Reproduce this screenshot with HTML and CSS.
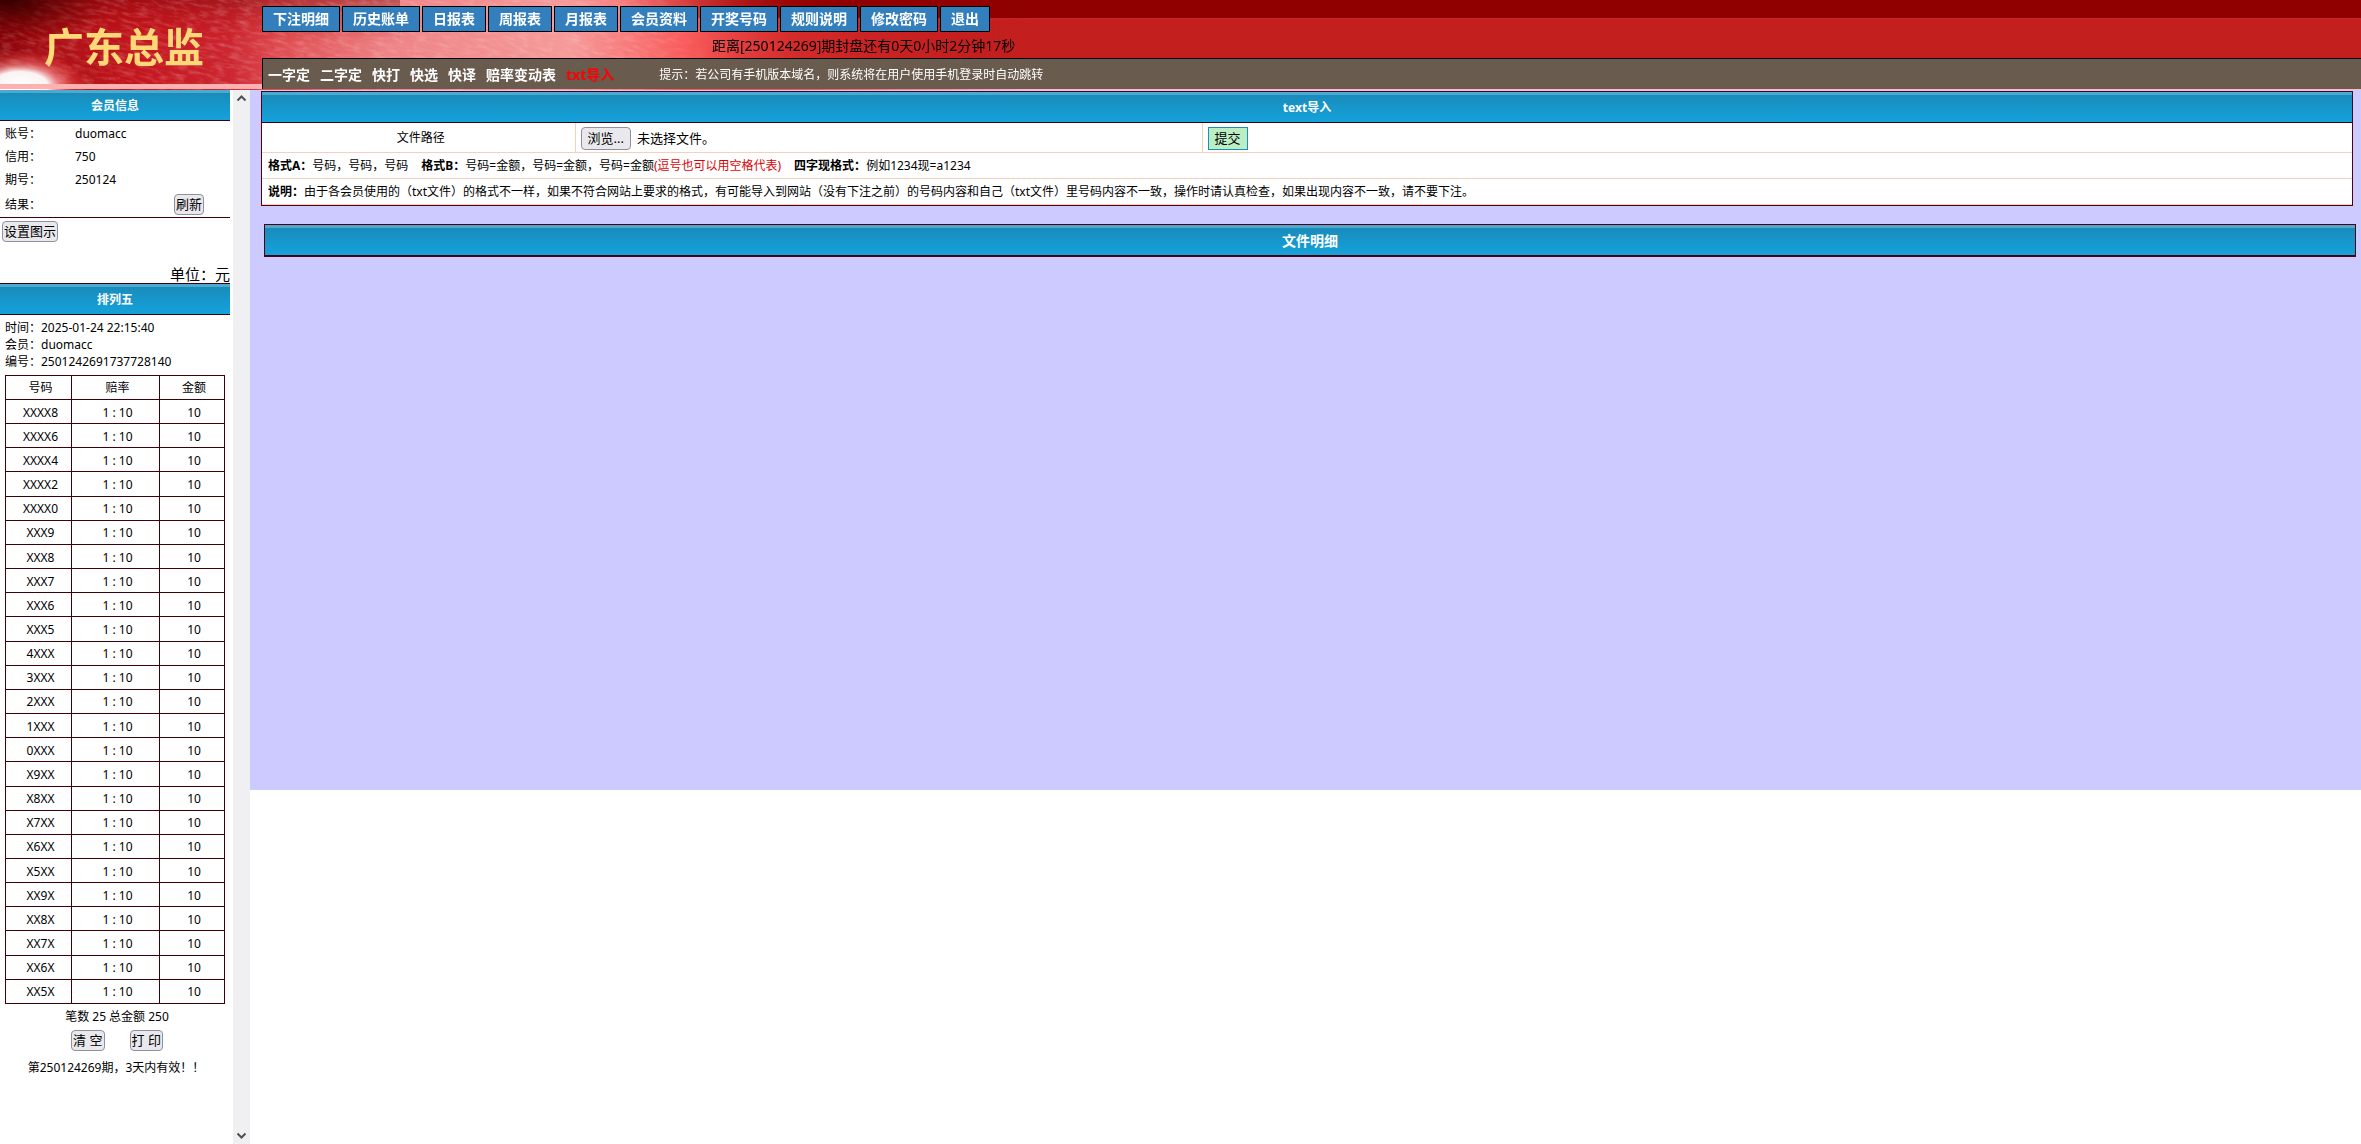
FILE: index.html
```html
<!DOCTYPE html>
<html lang="zh-CN">
<head>
<meta charset="utf-8">
<title>广东总监</title>
<link rel="stylesheet" href="styles.css">
</head>
<body>
<header class="top">
  <svg class="top-art" width="1140" height="90" aria-hidden="true">
    <defs>
      <linearGradient id="base" x1="0" x2="1" y1="0" y2="0">
        <stop offset="0" stop-color="#8a0308"/><stop offset=".04" stop-color="#a80f14"/><stop offset=".12" stop-color="#c4161e"/>
        <stop offset=".2" stop-color="#cc2630"/><stop offset=".25" stop-color="#e05054"/><stop offset=".34" stop-color="#ee8486"/>
        <stop offset=".5" stop-color="#f69a9a"/><stop offset=".6" stop-color="#fa5c5c"/><stop offset=".7" stop-color="#dc3030"/><stop offset=".88" stop-color="#c41e1e"/>
      </linearGradient>
      <linearGradient id="shade" x1="0" x2="0" y1="0" y2="1">
        <stop offset="0" stop-color="#700000" stop-opacity=".4"/><stop offset=".5" stop-color="#c00" stop-opacity="0"/>
      </linearGradient>
      <radialGradient id="glow"><stop offset="0" stop-color="#fff"/><stop offset=".4" stop-color="#fff" stop-opacity=".95"/><stop offset=".6" stop-color="#ff9090" stop-opacity=".6"/><stop offset="1" stop-color="#f33" stop-opacity="0"/></radialGradient>
      <radialGradient id="dark"><stop offset="0" stop-color="#300"/><stop offset="1" stop-color="#600" stop-opacity="0"/></radialGradient>
      <linearGradient id="corner" x1="0" x2="1" y1="0" y2="0"><stop offset="0" stop-color="#900000" stop-opacity="0"/><stop offset=".4" stop-color="#900000"/></linearGradient>
      <linearGradient id="fade" x1="0" x2="1" y1="0" y2="0"><stop offset="0" stop-color="#fff"/><stop offset=".6" stop-color="#fff"/><stop offset=".9" stop-color="#000"/></linearGradient>
      <linearGradient id="grain-fade" x1="0" x2="1" y1="0" y2="0"><stop offset="0" stop-color="#fff"/><stop offset=".55" stop-color="#fff"/><stop offset=".64" stop-color="#000"/></linearGradient>
      <mask id="m"><rect width="1140" height="90" fill="url(#fade)"/></mask>
      <mask id="gm"><rect width="1140" height="90" fill="url(#grain-fade)"/></mask>
      <filter id="grain" x="0" y="0" width="100%" height="100%"><feTurbulence type="fractalNoise" baseFrequency=".08 .3" numOctaves="4" seed="4"/><feColorMatrix values="0 0 0 0 1  0 0 0 0 .75  0 0 0 0 .75  2 0 0 0 -.85"/></filter>
    </defs>
    <g mask="url(#m)">
      <rect width="1140" height="90" fill="url(#base)"/>
      <rect width="400" height="90" fill="url(#shade)"/>
      <g mask="url(#gm)"><g transform="rotate(14 400 45)"><rect x="-100" y="-200" width="900" height="500" filter="url(#grain)" opacity=".28"/></g></g>
      <ellipse cx="10" cy="0" rx="100" ry="45" fill="url(#dark)"/>
      <ellipse cx="20" cy="86" rx="70" ry="36" fill="url(#glow)"/>
      <rect x="620" width="520" height="18" fill="url(#corner)"/>
    </g>
  </svg>
  <h1 class="logo">广东总监</h1>
  <div class="top-main">
    <nav class="nav">
      <button>下注明细</button><button>历史账单</button><button>日报表</button><button>周报表</button><button>月报表</button><button>会员资料</button><button>开奖号码</button><button>规则说明</button><button>修改密码</button><button>退出</button>
    </nav>
    <p class="countdown">距离[250124269]期封盘还有0天0小时2分钟17秒</p>
    <div class="menu">
      <a href="#">一字定</a><a href="#">二字定</a><a href="#">快打</a><a href="#">快选</a><a href="#">快译</a><a href="#">赔率变动表</a><a href="#" class="current">txt导入</a>
      <span class="tip">提示：若公司有手机版本域名，则系统将在用户使用手机登录时自动跳转</span>
    </div>
  </div>
</header>
<div class="body">
  <aside class="side">
    <div class="side-content">
      <h2 class="bar">会员信息</h2>
      <dl class="info">
        <div><dt>账号：</dt><dd>duomacc</dd></div>
        <div><dt>信用：</dt><dd>750</dd></div>
        <div><dt>期号：</dt><dd>250124</dd></div>
        <div class="result"><dt>结果：</dt><dd><button class="btn">刷新</button></dd></div>
      </dl>
      <div class="legend"><button class="btn">设置图示</button></div>
      <p class="unit">单位：元</p>
      <h2 class="bar ruled">排列五</h2>
      <div class="receipt">
        <p>时间：2025-01-24 22:15:40</p>
        <p>会员：duomacc</p>
        <p>编号：2501242691737728140</p>
      </div>
      <table class="bets">
        <thead><tr><th class="c1">号码</th><th class="c2">赔率</th><th>金额</th></tr></thead>
        <tbody>
          <tr><td>XXXX8</td><td>1 : 10</td><td>10</td></tr>
          <tr><td>XXXX6</td><td>1 : 10</td><td>10</td></tr>
          <tr><td>XXXX4</td><td>1 : 10</td><td>10</td></tr>
          <tr><td>XXXX2</td><td>1 : 10</td><td>10</td></tr>
          <tr><td>XXXX0</td><td>1 : 10</td><td>10</td></tr>
          <tr><td>XXX9</td><td>1 : 10</td><td>10</td></tr>
          <tr><td>XXX8</td><td>1 : 10</td><td>10</td></tr>
          <tr><td>XXX7</td><td>1 : 10</td><td>10</td></tr>
          <tr><td>XXX6</td><td>1 : 10</td><td>10</td></tr>
          <tr><td>XXX5</td><td>1 : 10</td><td>10</td></tr>
          <tr><td>4XXX</td><td>1 : 10</td><td>10</td></tr>
          <tr><td>3XXX</td><td>1 : 10</td><td>10</td></tr>
          <tr><td>2XXX</td><td>1 : 10</td><td>10</td></tr>
          <tr><td>1XXX</td><td>1 : 10</td><td>10</td></tr>
          <tr><td>0XXX</td><td>1 : 10</td><td>10</td></tr>
          <tr><td>X9XX</td><td>1 : 10</td><td>10</td></tr>
          <tr><td>X8XX</td><td>1 : 10</td><td>10</td></tr>
          <tr><td>X7XX</td><td>1 : 10</td><td>10</td></tr>
          <tr><td>X6XX</td><td>1 : 10</td><td>10</td></tr>
          <tr><td>X5XX</td><td>1 : 10</td><td>10</td></tr>
          <tr><td>XX9X</td><td>1 : 10</td><td>10</td></tr>
          <tr><td>XX8X</td><td>1 : 10</td><td>10</td></tr>
          <tr><td>XX7X</td><td>1 : 10</td><td>10</td></tr>
          <tr><td>XX6X</td><td>1 : 10</td><td>10</td></tr>
          <tr><td>XX5X</td><td>1 : 10</td><td>10</td></tr>
        </tbody>
      </table>
      <p class="sum">笔数 25 总金额 250</p>
      <div class="actions"><button class="btn">清 空</button><button class="btn">打 印</button></div>
      <p class="valid">第250124269期，3天内有效！！</p>
    </div>
    <div class="scroll" aria-hidden="true">
      <svg width="17" height="17" viewBox="0 0 17 17"><path d="M4.500 10.500l4-4 4 4" fill="none" stroke="#505050" stroke-width="2"/></svg>
      <svg width="17" height="17" viewBox="0 0 17 17"><path d="M4.500 6.500l4 4 4-4" fill="none" stroke="#505050" stroke-width="2"/></svg>
    </div>
  </aside>
  <main class="main">
    <form class="import">
      <h2 class="bar">text导入</h2>
      <div class="row file-row">
        <label class="path" for="file">文件路径</label>
        <div class="picker"><button type="button" class="btn browse" id="file">浏览...</button><span>未选择文件。</span></div>
        <div class="send"><button type="button" class="submit">提交</button></div>
      </div>
      <p class="row"><b>格式A：</b>号码，号码，号码<b class="next">格式B：</b>号码=金额，号码=金额，号码=金额<span class="note">(逗号也可以用空格代表)</span><b class="next">四字现格式：</b>例如1234现=a1234</p>
      <p class="row"><b>说明：</b>由于各会员使用的（txt文件）的格式不一样，如果不符合网站上要求的格式，有可能导入到网站（没有下注之前）的号码内容和自己（txt文件）里号码内容不一致，操作时请认真检查，如果出现内容不一致，请不要下注。</p>
    </form>
    <section class="details"><h2 class="bar detail-bar">文件明细</h2></section>
  </main>
</div>
</body>
</html>
```
FILE: styles.css
```css
* { box-sizing: border-box; }
body, h1, h2, p, dl, dd { margin: 0; }
body {
  display: flex;
  flex-direction: column;
  min-height: 100vh;
  background: #fff;
  color: #000;
  font: 12px/17px "Noto Sans", "Noto Sans CJK SC", sans-serif;
}
button, input { font-family: inherit; }

.top {
  position: relative;
  display: flex;
  height: 90px;
  background: linear-gradient(#900000 18px, #c82828 18px, #c41f1f 20px);
  border-bottom: 1px solid #ffb8c0;
}
.top-art { position: absolute; left: 0; top: 0; }
.logo {
  position: relative;
  width: 262px;
  padding: 18px 0 0 44px;
  color: #ffd878;
  font-size: 40px;
  line-height: 58px;
  border-bottom: 5px solid #ffb0b0;
}
.top-main { position: relative; flex: 1; display: flex; flex-direction: column; }
.nav { display: flex; gap: 2px; padding-top: 6px; }
.nav button {
  height: 26px;
  padding: 0 10px;
  border: 1px solid #000;
  background: #337fbe;
  color: #fff;
  font-size: 14px;
  font-weight: bold;
  line-height: 20px;
}
.countdown { padding: 2px 0 0 450px; font-size: 14px; line-height: 24px; }
.menu {
  display: flex;
  align-items: center;
  gap: 10px;
  height: 31px;
  padding-left: 5px;
  border-top: 1px solid #000;
  border-left: 1px solid #000;
  background: #695b4d;
  color: #fff;
}
.menu a { color: #fff; font-size: 14px; font-weight: bold; text-decoration: none; }
.menu .current { color: #f00; }
.tip { padding-left: 35px; }

.body { display: flex; flex: 1; align-items: flex-start; }
.side { display: flex; width: 250px; align-self: stretch; }
.side-content { flex: 1; margin-right: 3px; }
.scroll {
  display: flex;
  flex-direction: column;
  justify-content: space-between;
  width: 17px;
  background: #f0f0f2;
}
.bar {
  height: 31px;
  border-top: 3px solid #4fa9cf;
  border-bottom: 1px solid #400010;
  background: linear-gradient(#198cbb, #14a2db);
  color: #fff;
  font-size: 12px;
  line-height: 26px;
  text-align: center;
}
.info { padding-top: 1px; border-bottom: 1px solid #400008; }
.info div { display: flex; align-items: center; height: 23px; padding-left: 5px; }
.info dt { width: 70px; }
.info .result { height: 26px; }
.result dd { flex: 1; padding-left: 99px; }
.btn {
  height: 21px;
  padding: 0 1px;
  border: 1px solid #8f8f9d;
  border-radius: 4px;
  background: #e9e9ed;
  font-size: 13px;
  line-height: 17px;
}
.legend { display: flex; padding: 3px 1px 24px 2px; }
.unit { font-size: 15px; line-height: 17px; text-align: right; }
.ruled { box-shadow: 0 -1px #400008; margin-top: 1px; }
.receipt { padding: 4px 5px 5px; }
.bets { width: 220px; height: 629px; margin-left: 5px; border-collapse: collapse; table-layout: fixed; }
.bets th, .bets td { height: 24px; padding: 0 0 0 4px; border: 1px solid #400008; text-align: center; font-weight: normal; }
.bets td { padding-top: 1px; }
.c1 { width: 66px; }
.c2 { width: 88px; }
.sum { padding: 4px 0 5px 4px; text-align: center; }
.actions { display: flex; justify-content: center; gap: 25px; padding-left: 4px; }
.valid { padding: 8px 0 0 2px; text-align: center; }

.main {
  flex: 1;
  min-width: 0;
  min-height: 700px;
  padding: 1px 5px 0 11px;
  background: #cccaff;
}
.import { margin-right: 3px; border: 1px solid #500010; background: #fff; }
.row { min-height: 26px; padding: 1px 6px 0; border-bottom: 1px solid #f5d0bc; line-height: 24px; }
.file-row { display: grid; grid-template-columns: 15% 30% 55%; height: 30px; padding: 0; }
.path { padding-left: 5px; border-right: 1px solid #f5d0bc; text-align: center; line-height: 30px; }
.picker, .send { display: flex; align-items: center; gap: 6px; padding-left: 5px; font-size: 13px; }
.picker { border-right: 1px solid #f5d0bc; }
.browse { height: 23px; padding: 0 6px; }
.submit { height: 23px; padding: 0 6px; border: 1px solid #1890bb; background: #bceec4; font-size: 13px; line-height: 17px; }
.note { color: #e00000; }
.next { padding-left: 13px; }
.details { margin: 18px 0 0 3px; border: 1px solid #500010; }
.detail-bar { font-size: 14px; line-height: 25px; }
```
